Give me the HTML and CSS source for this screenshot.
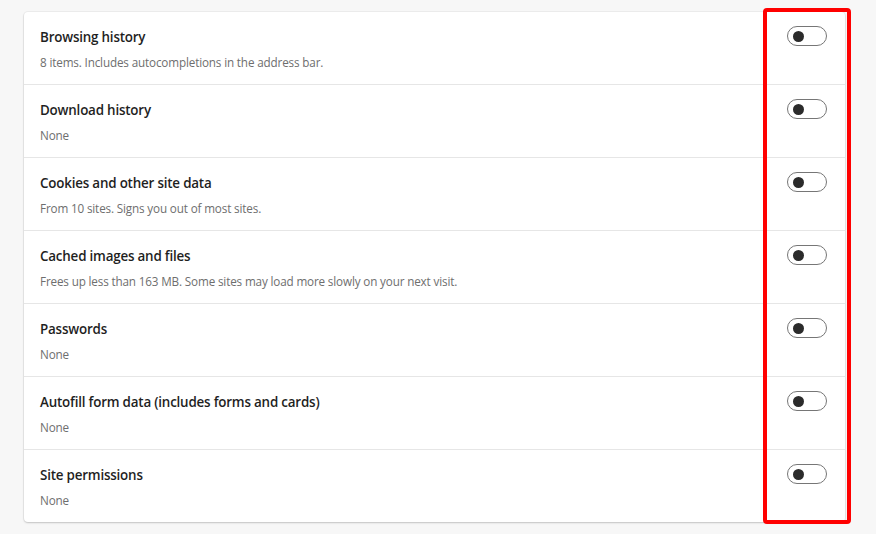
FILE: index.html
```html
<!DOCTYPE html>
<html>
<head>
<meta charset="utf-8">
<link rel="stylesheet" href="styles.css">
</head>
<body>
<div class="page">
  <div class="card">
    <div class="row">
      <div class="text"><div class="title">Browsing history</div><div class="sub">8 items. Includes autocompletions in the address bar.</div></div>
      <div class="toggle"><span class="knob"></span></div>
    </div>
    <div class="row">
      <div class="text"><div class="title">Download history</div><div class="sub">None</div></div>
      <div class="toggle"><span class="knob"></span></div>
    </div>
    <div class="row">
      <div class="text"><div class="title">Cookies and other site data</div><div class="sub">From 10 sites. Signs you out of most sites.</div></div>
      <div class="toggle"><span class="knob"></span></div>
    </div>
    <div class="row">
      <div class="text"><div class="title">Cached images and files</div><div class="sub">Frees up less than 163 MB. Some sites may load more slowly on your next visit.</div></div>
      <div class="toggle"><span class="knob"></span></div>
    </div>
    <div class="row">
      <div class="text"><div class="title">Passwords</div><div class="sub">None</div></div>
      <div class="toggle"><span class="knob"></span></div>
    </div>
    <div class="row">
      <div class="text"><div class="title">Autofill form data (includes forms and cards)</div><div class="sub">None</div></div>
      <div class="toggle"><span class="knob"></span></div>
    </div>
    <div class="row">
      <div class="text"><div class="title">Site permissions</div><div class="sub">None</div></div>
      <div class="toggle"><span class="knob"></span></div>
    </div>
  </div>
  <div class="highlight"></div>
</div>
</body>
</html>
```
FILE: styles.css
```css
html, body {
  margin: 0;
  padding: 0;
  background: #f7f7f7;
  font-family: "Open Sans", "Noto Sans", sans-serif;
}
.page {
  position: relative;
  width: 876px;
  height: 534px;
  padding: 12px 0 0 24px;
  box-sizing: border-box;
}
.card {
  width: 821px;
  background: #fff;
  border-radius: 4px;
  box-shadow: 0 0 0 1px rgba(0,0,0,0.04), 0 1px 2px rgba(0,0,0,0.18);
}
.row {
  display: flex;
  align-items: flex-start;
  justify-content: space-between;
  padding: 15px 18px 13px 16px;
  border-bottom: 1px solid #e6e6e6;
  height: 44px;
}
.row:last-child {
  border-bottom: none;
}
.title {
  font-size: 13.4px;
  line-height: 20px;
  font-weight: 600;
  color: #1f1f1f;
  letter-spacing: -0.2px;
}
.sub {
  margin-top: 7px;
  font-size: 11.7px;
  line-height: 16px;
  color: #6e6e6e;
  letter-spacing: -0.15px;
}
.toggle {
  width: 33px;
  height: 18px;
  border: 1px solid #767676;
  border-radius: 10px;
  display: flex;
  align-items: center;
  padding-left: 5px;
  box-sizing: content-box;
  margin-top: -1px;
}
.toggle .knob {
  width: 11px;
  height: 11px;
  border-radius: 50%;
  background: #2b2b2b;
}
.highlight {
  position: absolute;
  left: 763px;
  top: 8px;
  width: 88px;
  height: 516px;
  box-sizing: border-box;
  border: 4px solid #ff0000;
  border-radius: 4px;
}
```
